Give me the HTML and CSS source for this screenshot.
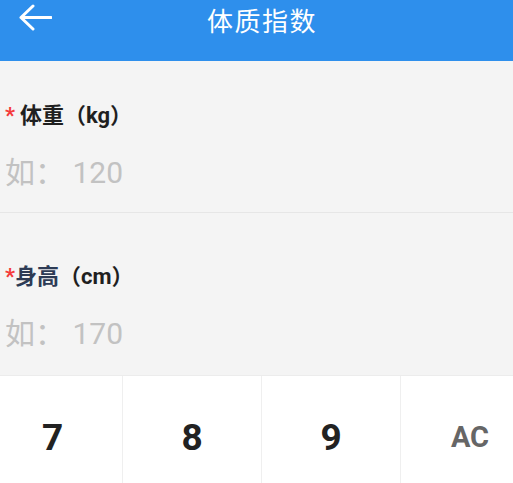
FILE: index.html
```html
<!DOCTYPE html>
<html lang="zh">
<head>
<meta charset="utf-8">
<title>体质指数</title>
<link rel="stylesheet" href="styles.css">
</head>
<body>
<div class="page">
  <header class="header">
    <span class="back">
      <svg width="34" height="30" viewBox="0 0 34 30"><path d="M15 3 L3 14.5 L15 26 M3 14.5 H33" fill="none" stroke="#fff" stroke-width="3" stroke-linecap="round" stroke-linejoin="round"/></svg>
    </span>
    <h1 class="title">体质指数</h1>
  </header>
  <section class="field field-weight">
    <div class="label"><span class="req">*</span><span class="gap"></span>体重（kg）</div>
    <div class="placeholder">如： 120</div>
  </section>
  <section class="field field-height">
    <div class="label"><span class="req">*</span><span class="navy">身高</span>（cm）</div>
    <div class="placeholder">如： 170</div>
  </section>
  <div class="keyboard">
    <div class="key key-first">7</div>
    <div class="key">8</div>
    <div class="key">9</div>
    <div class="key key-ac">AC</div>
  </div>
</div>
</body>
</html>
```
FILE: styles.css
```css
html, body {
  margin: 0;
  padding: 0;
  background: #f4f4f4;
  overflow: hidden;
}
.page {
  width: 513px;
  height: 483px;
  overflow: hidden;
  font-family: "Roboto", "Noto Sans CJK SC", sans-serif;
}
.header {
  position: relative;
  height: 61px;
  background: #2e8fec;
  display: flex;
  justify-content: center;
  padding-left: 11px;
  box-sizing: border-box;
}
.back {
  position: absolute;
  left: 18px;
  top: 3px;
  display: block;
  width: 34px;
  height: 30px;
}
.back svg { display: block; }
.title {
  margin: 0;
  font-family: "Noto Sans CJK SC", sans-serif;
  font-weight: 400;
  font-size: 26px;
  line-height: 40px;
  color: #fff;
  letter-spacing: 1.5px;
}
.field {
  padding-left: 5px;
}
.field-weight {
  padding-top: 40px;
  padding-bottom: 19px;
  border-bottom: 1px solid #e6e6e6;
}
.field-height {
  padding-top: 49px;
  padding-bottom: 21px;
}
.label {
  font-family: "Roboto", "Noto Sans CJK SC", sans-serif;
  font-weight: 700;
  font-size: 22px;
  line-height: 30px;
  height: 30px;
  color: #1f1f1f;
  display: flex;
  align-items: center;
}
.req {
  color: #f43b3b;
  font-size: 22px;
  font-weight: 700;
}
.gap { width: 5px; }
.navy { color: #2d3b55; }
.placeholder {
  margin-top: 22px;
  font-family: "Roboto", "Noto Sans CJK SC", sans-serif;
  font-size: 30px;
  line-height: 40px;
  height: 40px;
  color: #c2c2c2;
}
.keyboard {
  display: grid;
  grid-template-columns: 122px 139px 139px 113px;
  background: #fff;
  border-top: 1px solid #ececec;
  height: 122px;
}
.key {
  display: flex;
  align-items: center;
  justify-content: center;
  font-family: "Roboto", sans-serif;
  font-weight: 700;
  font-size: 37px;
  color: #222;
  border-left: 1px solid #efefef;
}
.key-first {
  border-left: none;
  padding-right: 17px;
}
.key-ac {
  font-size: 29px;
  color: #666;
  padding-left: 26px;
}
```
